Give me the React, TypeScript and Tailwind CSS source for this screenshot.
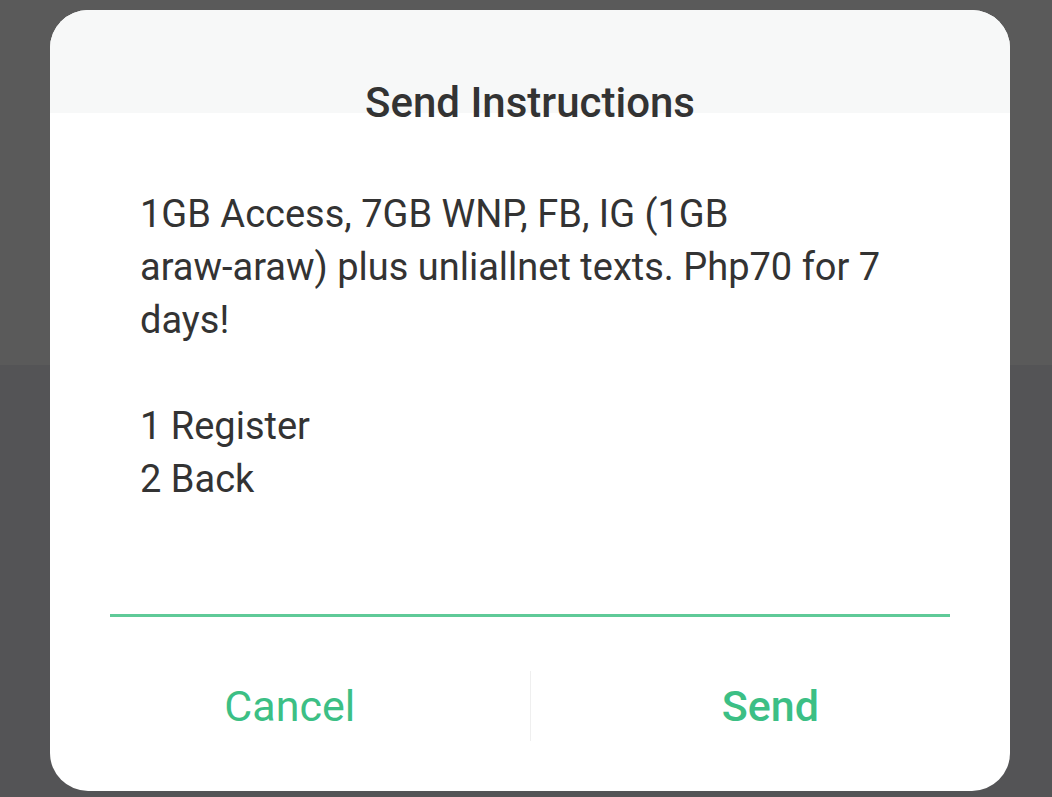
import React from "react";

export default function App() {
  return (
    <div
      className="relative w-[1052px] h-[797px] overflow-hidden"
      style={{ fontFamily: "Roboto, 'Noto Sans', sans-serif" }}
    >
      <div className="flex flex-col h-full">
        <div className="h-[365px] bg-[#5a5a5a]" />
        <div className="flex-1 bg-[#545456]" />
      </div>
      <div className="absolute left-[50px] top-[10px] w-[960px] h-[781px] rounded-[38px] bg-white overflow-hidden flex flex-col">
        <div className="h-[103px] shrink-0 bg-[#f7f8f8] flex items-end justify-center">
          <div className="text-[42px] font-medium text-[#333333] leading-none translate-y-[11px]">
            Send Instructions
          </div>
        </div>
        <div className="px-[90px] pt-[75px] text-[38px] leading-[53px] text-[#333333] whitespace-pre-line">
          {"1GB Access, 7GB WNP, FB, IG (1GB\naraw-araw) plus unliallnet texts. Php70 for 7\ndays!\n\n1 Register\n2 Back"}
        </div>
        <div className="mx-[60px] mt-[108px] h-[3px] shrink-0 bg-[#5fca98]" />
        <div className="flex items-center h-[70px] mt-[54px] shrink-0">
          <div className="flex-1 flex justify-center">
            <span className="text-[43px] text-[#3cbf85] leading-none">Cancel</span>
          </div>
          <div className="w-px self-stretch bg-[#efefef]" />
          <div className="flex-1 flex justify-center">
            <span className="text-[43px] font-medium text-[#3cbf85] leading-none">Send</span>
          </div>
        </div>
      </div>
    </div>
  );
}
